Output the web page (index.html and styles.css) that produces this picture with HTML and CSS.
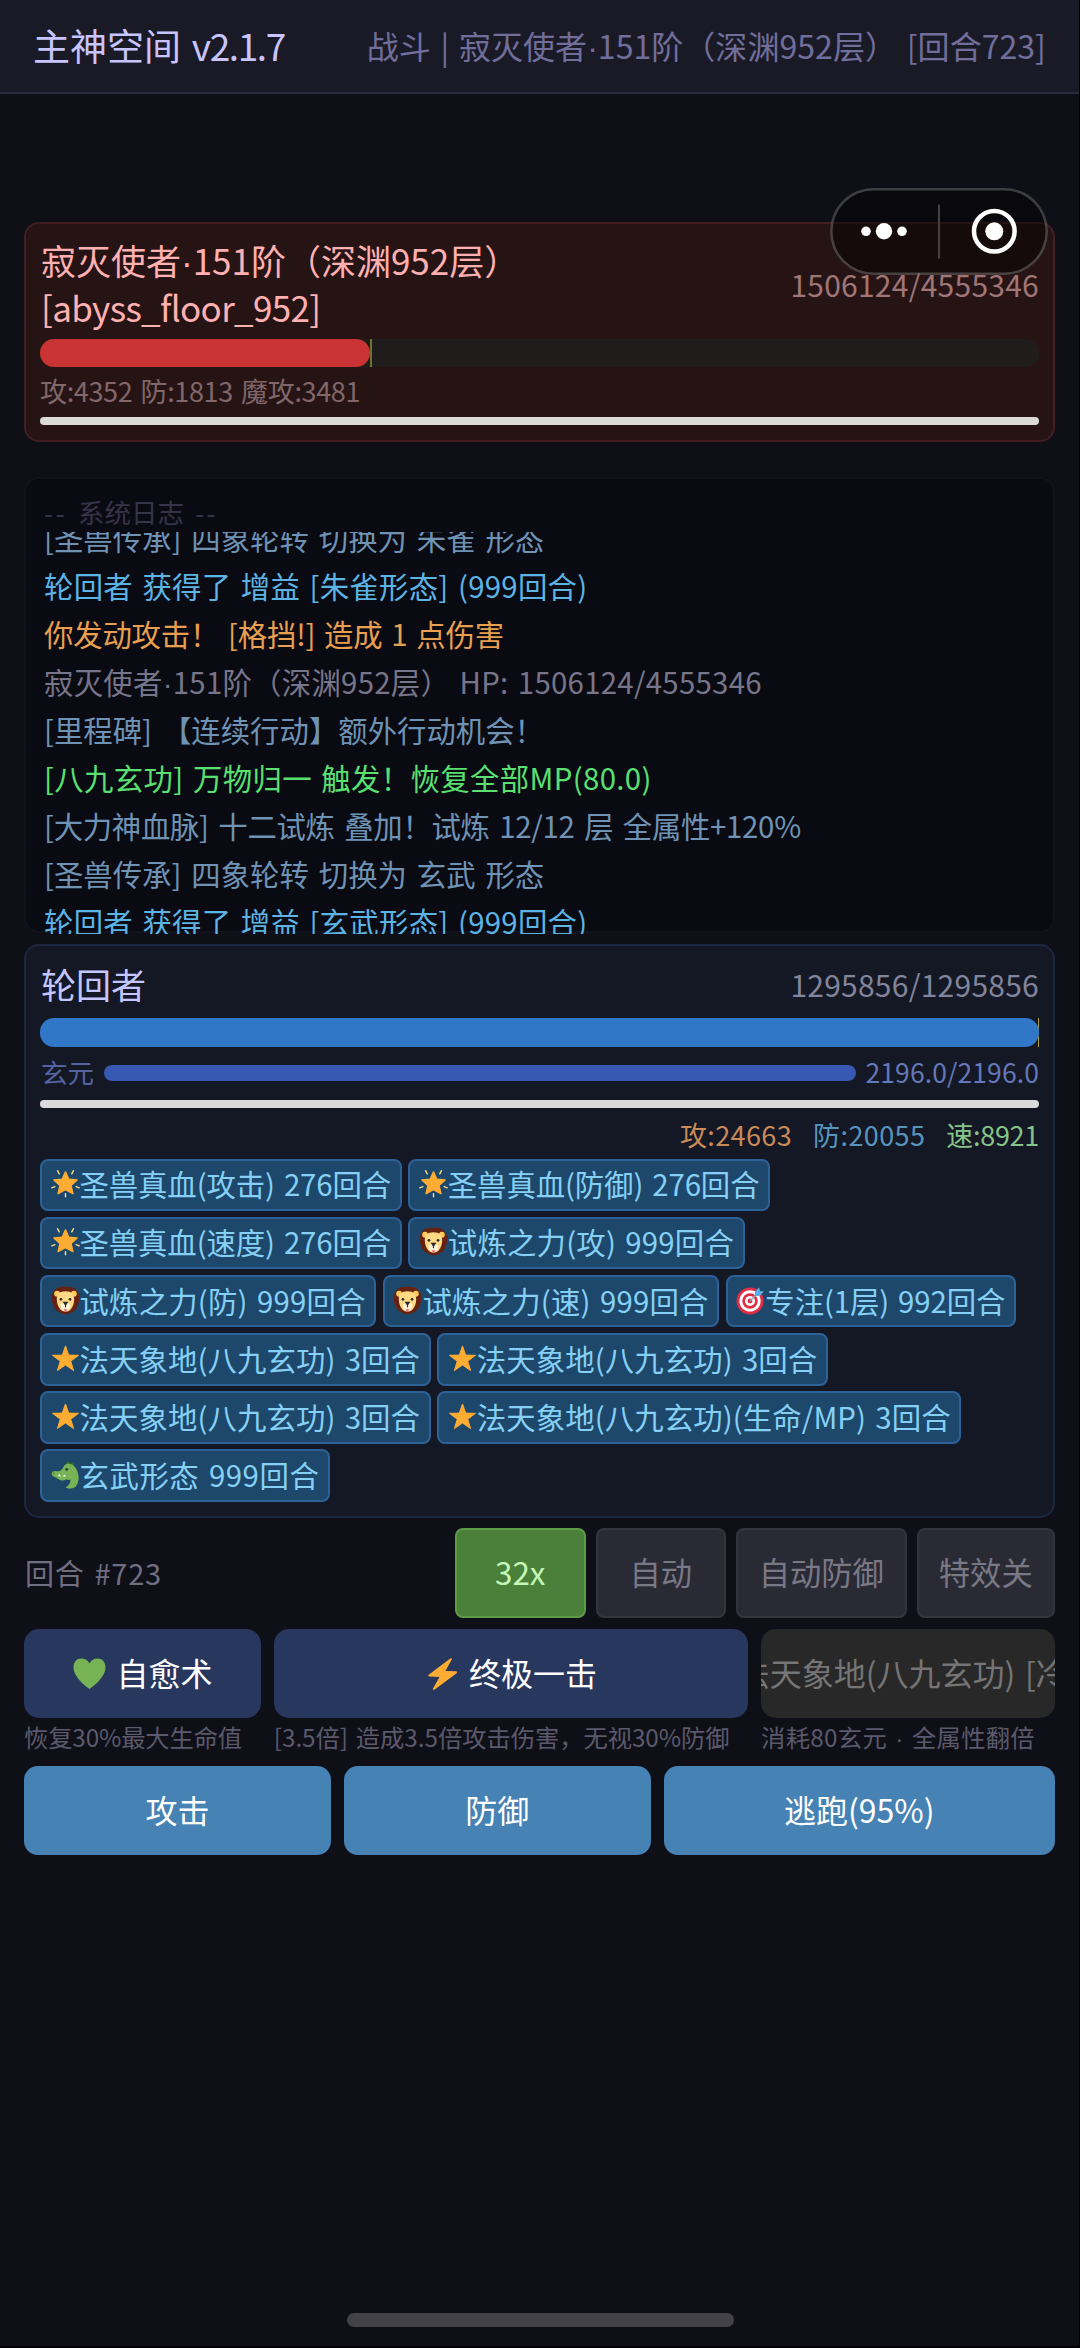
FILE: index.html
```html
<!DOCTYPE html>
<html lang="zh-CN">
<head>
<meta charset="utf-8">
<title>主神空间</title>
<link rel="stylesheet" href="styles.css">
</head>
<body>
<svg class="defs" aria-hidden="true">
  <symbol id="glow" viewBox="0 0 30 30">
    <path fill="#ffac33" stroke="#ffac33" stroke-width="1.500" stroke-linejoin="round" d="M15 3l3.400 7.600 8.600.8-6.300 5.700 2 8.300L15 21.200l-7.700 4.200 2-8.300L3 11.400l8.600-.8z"/>
    <path fill="none" stroke="#ffd983" stroke-width="1.500" stroke-linecap="round" d="M8.500 5L6.800 1.800M21.500 5l1.700-3.200M4 18.300l-3.200 1.200M26 18.300l3.200 1.200M15 25.500v3.300"/>
  </symbol>
  <symbol id="star" viewBox="0 0 30 30">
    <path fill="#ffac33" stroke="#ffac33" stroke-width="1" stroke-linejoin="round" d="M15 2l3.300 9.500 10.200.2-8.100 6.100 3 9.700L15 21.700l-8.400 5.800 3-9.700-8.100-6.100 10.200-.2z"/>
  </symbol>
  <symbol id="lion" viewBox="0 0 30 30">
    <path fill="#662113" d="M15 1C10 .3 5 2 3.300 5 .5 8 .3 13 1.300 17c.7 4 3 8 7 10 2 1.500 4.300 2.300 6.700 2.300s4.700-.8 6.700-2.300c4-2 6.300-6 7-10 1-4 .8-9-2-12C25 2 20 .3 15 1z"/>
    <circle cx="6.300" cy="8" r="3" fill="#ffcb5c"/><circle cx="23.700" cy="8" r="3" fill="#ffcb5c"/>
    <path fill="#ffd983" d="M15 5.500C8.500 5.500 6 9 6 14c0 4 1.500 7.500 3.500 10 1.300 1.700 3.300 2.500 5.500 2.500s4.200-.8 5.500-2.500c2-2.500 3.500-6 3.500-10 0-5-2.500-8.500-9-8.500z"/>
    <path fill="#fff3dc" d="M15 16c-1.500 1.500-5 1.500-5 4.500S12 26 15 26.500c3-.5 5-3 5-6S16.500 17.500 15 16z"/>
    <path fill="#272b2b" d="M12 16.300h6L15.600 20v2h-1.200v-2z"/>
    <circle cx="10.300" cy="13.800" r="1.400" fill="#272b2b"/><circle cx="19.700" cy="13.800" r="1.400" fill="#272b2b"/>
    <path fill="#ea596e" d="M13 24h4l-2 3z"/>
  </symbol>
  <symbol id="target" viewBox="0 0 30 30">
    <circle cx="14.500" cy="15.500" r="14" fill="#dd2e44"/><circle cx="14.500" cy="15.500" r="11" fill="#fff"/>
    <circle cx="14.500" cy="15.500" r="8" fill="#dd2e44"/><circle cx="14.500" cy="15.500" r="5.200" fill="#fff"/>
    <circle cx="14.500" cy="15.500" r="2.500" fill="#dd2e44"/>
    <path stroke="#99aab5" stroke-width="1.500" d="M14.500 15.500l8-8"/>
    <path fill="#5dadec" d="M19.500 10.500l.2-5L24 1.500l.8 3.800 4.200.4-4.300 4.300z"/>
  </symbol>
  <symbol id="dragon" viewBox="0 0 30 30">
    <path fill="#3e721d" d="M15 4l3-3 2 3 3-1 1 4z"/>
    <path fill="#77b255" d="M14.500 5C18 2.500 23 4 26 9c3 5 3.500 12 1 16-1 2.500-3 4-6 4.500-3 .3-6-.3-5.500-1.500 2.500-1.500 5-4 4.500-8-1 1-3 .5-4 0-3 2-6 1.500-8-.2-2-1.200-3-2-5-2.600-2.500-.7-3-3.700-1-5.200 2.500-1.700 5 .5 7.500-.8C12.500 10 12.500 7 14.500 5z"/>
    <path fill="#fff" d="M7 16.300l2-1.800 1.300 2.800zM12 17l2-2 1.500 2z"/>
    <path fill="#292f33" d="M14.500 8.500l3.500.3-.8 2-1.800.2zM2 13l1.600.4-.6 1z"/>
  </symbol>
</svg>

<header class="topbar">
  <h1 class="brand">主神空间 <span class="ver">v2.1.7</span></h1>
  <div class="where">战斗 | 寂灭使者<i class="dot">·</i>151阶（深渊952层） [回合723]</div>
</header>

<main class="stage">
  <section class="card enemy">
    <div class="head">
      <div class="name">寂灭使者<i class="dot">·</i>151阶（深渊952层）<br><span class="code">[abyss_floor_952]</span></div>
      <div class="hp">1506124/4555346</div>
    </div>
    <div class="bar"><div class="fill" style="width:33.06%"></div></div>
    <div class="info">攻:4352 防:1813 魔攻:3481</div>
    <div class="thin"></div>
  </section>

  <section class="log">
    <div class="log-title"><span>--</span> 系统日志 <span>--</span></div>
    <div class="log-view">
      <div class="lines">
        <p class="sys">[圣兽传承] 四象轮转 切换为 朱雀 形态</p>
        <p class="buff">轮回者 获得了 增益 [朱雀形态] (999回合)</p>
        <p class="hit">你发动攻击！ [格挡!] 造成 1 点伤害</p>
        <p class="note">寂灭使者<i class="dot">·</i>151阶（深渊952层） HP: 1506124/4555346</p>
        <p class="sys">[里程碑] 【连续行动】额外行动机会！</p>
        <p class="heal">[八九玄功] 万物归一 触发！恢复全部MP(80.0)</p>
        <p class="sys tight">[大力神血脉] 十二试炼 叠加！试炼 12/12 层 全属性+120%</p>
        <p class="sys">[圣兽传承] 四象轮转 切换为 玄武 形态</p>
        <p class="buff">轮回者 获得了 增益 [玄武形态] (999回合)</p>
      </div>
    </div>
  </section>

  <section class="card player">
    <div class="head">
      <div class="name">轮回者</div>
      <div class="hp">1295856/1295856</div>
    </div>
    <div class="bar"><div class="fill" style="width:100%"></div></div>
    <div class="mp"><span>玄元</span><div class="mp-bar"></div><span class="mp-num">2196.0/2196.0</span></div>
    <div class="thin"></div>
    <div class="stats"><span class="atk">攻:24663</span><span class="def">防:20055</span><span class="spd">速:8921</span></div>
    <div class="chips">
      <span class="chip"><svg><use href="#glow"/></svg>圣兽真血(攻击) 276回合</span>
      <span class="chip"><svg><use href="#glow"/></svg>圣兽真血(防御) 276回合</span>
      <span class="chip"><svg><use href="#glow"/></svg>圣兽真血(速度) 276回合</span>
      <span class="chip trial"><svg><use href="#lion"/></svg>试炼之力(攻) 999回合</span>
      <span class="chip trial"><svg><use href="#lion"/></svg>试炼之力(防) 999回合</span>
      <span class="chip trial"><svg><use href="#lion"/></svg>试炼之力(速) 999回合</span>
      <span class="chip focus"><svg><use href="#target"/></svg>专注(1层) 992回合</span>
      <span class="chip law"><svg><use href="#star"/></svg>法天象地(八九玄功) 3回合</span>
      <span class="chip law"><svg><use href="#star"/></svg>法天象地(八九玄功) 3回合</span>
      <span class="chip law"><svg><use href="#star"/></svg>法天象地(八九玄功) 3回合</span>
      <span class="chip law"><svg><use href="#star"/></svg>法天象地(八九玄功)(生命/MP) 3回合</span>
      <span class="chip form"><svg><use href="#dragon"/></svg>玄武形态 999回合</span>
    </div>
  </section>

  <div class="controls">
    <div class="round">回合 #723</div>
    <button class="on">32x</button>
    <button>自动</button>
    <button class="wide">自动防御</button>
    <button class="fx">特效关</button>
  </div>

  <div class="skills">
    <div>
      <button><svg viewBox="0 0 36 36"><path fill="#77b255" d="M18 34C12 29.500 1.500 21 1.500 11.500 1.500 6 5 2.500 9.800 2.500c3.500 0 6.500 1.700 8.200 5 1.700-3.300 4.700-5 8.200-5 4.800 0 8.300 3.500 8.300 9C34.500 21 24 29.500 18 34z"/></svg>自愈术</button>
      <small>恢复30%最大生命值</small>
    </div>
    <div>
      <button><svg viewBox="0 0 36 36"><path fill="#ffac33" d="M26 2.500L3.800 19.200c-.8.700-.4 1.800.5 1.900L15 21.500 8.200 33.300c-.5 1 .4 1.900 1.500 1.300L32.500 17.800c.9-.7.500-1.900-.5-2L21 15.300l6.500-11.600c.5-1-.5-1.900-1.500-1.200z"/></svg>终极一击</button>
      <small class="mid">[3.5倍] 造成3.5倍攻击伤害，无视30%防御</small>
    </div>
    <div>
      <button class="off">法天象地(八九玄功) [冷]</button>
      <small class="last">消耗80玄元 <i class="dot">·</i> 全属性翻倍</small>
    </div>
  </div>

  <div class="actions">
    <button>攻击</button>
    <button>防御</button>
    <button>逃跑(95%)</button>
  </div>
</main>

<div class="capsule">
  <svg viewBox="0 0 218 87">
    <g fill="#fff"><circle cx="36" cy="43.300" r="4.800"/><circle cx="54" cy="43.300" r="8.200"/><circle cx="72" cy="43.300" r="4.800"/><circle cx="164.300" cy="43.300" r="9"/></g>
    <path stroke="#47423f" stroke-width="2" d="M109 16.500v54"/>
    <circle cx="164.300" cy="43.300" r="20.300" fill="none" stroke="#fff" stroke-width="4.500"/>
  </svg>
</div>
<div class="homebar"></div>
</body>
</html>
```
FILE: styles.css
```css
* { box-sizing: border-box; }

body {
  position: relative;
  margin: 0;
  height: 2348px;
  overflow: hidden;
  border-right: 1px solid #000;
  border-bottom: 2px solid #000;
  background: #0f0f18;
  font-family: "Noto Sans CJK SC", sans-serif;
  font-weight: 400;
  word-spacing: 2.5px;
  white-space: nowrap;
}

.defs { position: absolute; width: 0; height: 0; }
.dot { font-family: "Liberation Sans", sans-serif; font-style: normal; line-height: 0; }

button {
  display: flex;
  align-items: center;
  justify-content: center;
  margin: 0;
  border: 0;
  padding: 0 0 3px;
  font: inherit;
  word-spacing: inherit;
  white-space: nowrap;
}

.topbar {
  display: flex;
  justify-content: space-between;
  align-items: center;
  height: 94px;
  padding: 0 33px 3px 33px;
  border-bottom: 2px solid #2a2a3d;
  background: #1a1a27;
}
.brand { margin: 0; font-size: 37px; font-weight: 400; color: #c8c4ff; }
.ver { letter-spacing: -1.4px; }
.where { font-size: 32px; letter-spacing: .05px; color: #716e9b; }

.stage { padding: 128px 24px 0; }

.card { border: 2px solid; border-radius: 15px; padding: 12px 14px 0; }
.enemy { height: 220px; border-color: #411f22; background: #261414; }
.player { height: 574.5px; margin-top: 10.5px; padding-top: 17px; border-color: #1c2841; background: #141724; }

.head { display: flex; justify-content: space-between; align-items: center; }
.name { padding-left: 1px; font-size: 35px; line-height: 47px; color: #ffb0b0; }
.player .name { line-height: 42px; color: #c3c6ff; }
.code { letter-spacing: -.65px; }
.hp { font-size: 30px; letter-spacing: .25px; color: #a07576; padding-top: 2px; }
.player .head { height: 42px; }
.player .hp { color: #81849a; padding: 0; }

.bar { height: 28px; margin-top: 9px; border-radius: 14px; background: #201c1b; }
.fill { height: 100%; border-radius: 14px; background: #c93333; }
.enemy .bar { background: linear-gradient(90deg, transparent 33.06%, #6d7430 33.06%, #6d7430 33.2%, transparent 33.2%), #201c1b; }
.player .bar { height: 29px; margin-top: 13px; border-radius: 14px 0 0 14px; background: linear-gradient(90deg, transparent 99.9%, #b0a032 99.9%); }
.player .fill { background: #3077c8; }

.info { margin-top: 5px; font-size: 27px; line-height: 38px; letter-spacing: -.35px; color: #81676a; }
.thin { height: 8px; margin-top: 7px; border-radius: 4px; background: #dcdad8; }

.log {
  height: 456px;
  margin-top: 35px;
  padding: 16px 18px 0;
  border: 2px solid #12121c;
  border-radius: 15px;
  background: #0a0a12;
}
.log-title { font-size: 26.5px; line-height: 33px; word-spacing: 5px; color: #383348; }
.log-title span { letter-spacing: 2.3px; }
.log-view { height: 402px; margin-top: 4px; overflow: hidden; font-size: 29.4px; line-height: 48.1px; }
.lines { margin-top: -19.5px; }
.lines p { margin: 0; }
.sys { color: #6f93b5; word-spacing: 3.3px; }
.tight { letter-spacing: -.3px; }
.buff { color: #5cb4e4; letter-spacing: .28px; }
.hit { color: #e8a050; letter-spacing: -.2px; }
.note { color: #77758a; letter-spacing: .27px; }
.heal { color: #5ae070; letter-spacing: .35px; }

.mp { display: flex; align-items: center; margin-top: 9px; height: 34px; font-size: 26.5px; line-height: 34px; color: #5564a0; }
.mp span { padding: 0 0 1px 1px; }
.mp-bar { flex: 1; height: 16px; margin: 0 9px 0 10px; border-radius: 8px; background: #3759b3; }
.mp-num { color: #6477b8; letter-spacing: .1px; }
.player .thin { margin-top: 10px; background: #dadadd; }
.stats { display: flex; justify-content: flex-end; gap: 21px; margin-top: 9px; font-size: 27px; line-height: 35px; }
.atk { color: #c98a58; letter-spacing: .4px; }
.def { color: #5694bd; letter-spacing: .4px; }
.spd { color: #86c488; letter-spacing: -.3px; }

.chips { display: flex; flex-wrap: wrap; gap: 5.7px 6.7px; margin-top: 7px; }
.chip {
  display: flex;
  align-items: center;
  height: 52.5px;
  padding: 0 8.5px 3px;
  border: 2px solid #2d6298;
  border-radius: 8px;
  background: #1d486b;
  font-size: 29.4px;
  letter-spacing: -.1px;
  color: #86d0f6;
}
.chip svg { width: 29px; height: 29px; margin: 1px 0 0; }
.trial { letter-spacing: .2px; }
.focus { letter-spacing: -.1px; }
.law { letter-spacing: .1px; }
.form { letter-spacing: .55px; }

.controls { display: flex; align-items: center; margin-top: 10px; height: 90px; }
.round { flex: 1; padding: 0 0 2px 1px; font-size: 29px; letter-spacing: .8px; color: #706e80; }
.controls button {
  width: 130.5px;
  height: 90px;
  margin-left: 10px;
  border: 2px solid #34343f;
  border-radius: 8px;
  background: #2a2a35;
  font-size: 31.3px;
  color: #797885;
}
.controls .on { border-color: #5c9b48; background: #4b803a; color: #c4f8b8; }
.controls .wide { width: 170.5px; }
.controls .fx { width: 138.5px; }

.skills { display: grid; grid-template-columns: 237px 474.5px 294px; gap: 12.8px; margin-top: 11px; }
.skills button {
  width: 100%;
  height: 89px;
  border-radius: 15px;
  background: #27375d;
  font-size: 32px;
  color: #fff;
}
.skills svg { width: 35px; height: 35px; margin: 3px 9px 0 0; }
.skills .off { overflow: hidden; background: #282828; color: #757575; }
.skills small { display: block; margin-top: 4px; font-size: 24.3px; line-height: 30px; letter-spacing: -.15px; color: #5b596b; }
.skills .mid { letter-spacing: -.05px; }
.skills .last { letter-spacing: .3px; }

.actions { display: grid; grid-template-columns: 307px 307px 1fr; gap: 12.8px; margin-top: 14px; }
.actions button { height: 88.5px; border-radius: 14px; background: #4682b4; font-size: 32px; color: #fff; }

.capsule {
  position: absolute;
  left: 830px;
  top: 187.5px;
  width: 218px;
  height: 87px;
  border-radius: 44px;
  background: rgba(0, 0, 0, .42);
  box-shadow: inset 0 0 0 2.5px rgba(255, 255, 255, .22);
}
.capsule svg { display: block; width: 100%; height: 100%; }

.homebar {
  position: absolute;
  left: 347px;
  bottom: 19px;
  width: 387px;
  height: 14px;
  border-radius: 7px;
  background: #424247;
}
```
